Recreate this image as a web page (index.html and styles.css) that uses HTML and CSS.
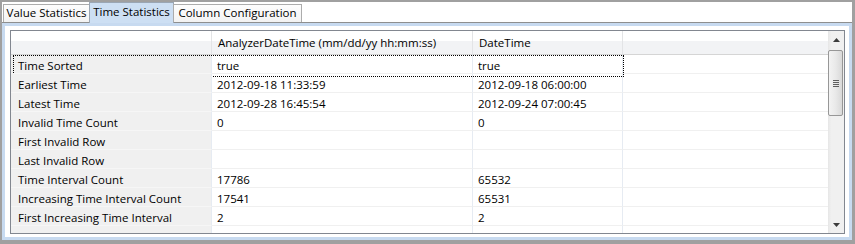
FILE: index.html
```html
<!DOCTYPE html>
<html>
<head>
<link rel="stylesheet" href="styles.css">
</head>
<body>

<div class="window">
  <div class="tabs">
    <div class="tab tab-value">Value Statistics</div>
    <div class="tab tab-time selected">Time Statistics</div>
    <div class="tab tab-columns">Column Configuration</div>
  </div>

  <div class="panel">
    <div class="grid">
      <div class="grid-body">
        <div class="row head">
          <div class="cell c1"></div>
          <div class="cell c2">AnalyzerDateTime (mm/dd/yy hh:mm:ss)</div>
          <div class="cell c3">DateTime</div>
          <div class="cell c4"></div>
        </div>
        <div class="row focused">
          <div class="cell c1">Time Sorted</div>
          <div class="cell c2">true</div>
          <div class="cell c3">true</div>
          <div class="cell c4"></div>
        </div>
        <div class="row">
          <div class="cell c1">Earliest Time</div>
          <div class="cell c2">2012-09-18 11:33:59</div>
          <div class="cell c3">2012-09-18 06:00:00</div>
          <div class="cell c4"></div>
        </div>
        <div class="row">
          <div class="cell c1">Latest Time</div>
          <div class="cell c2">2012-09-28 16:45:54</div>
          <div class="cell c3">2012-09-24 07:00:45</div>
          <div class="cell c4"></div>
        </div>
        <div class="row">
          <div class="cell c1">Invalid Time Count</div>
          <div class="cell c2">0</div>
          <div class="cell c3">0</div>
          <div class="cell c4"></div>
        </div>
        <div class="row">
          <div class="cell c1">First Invalid Row</div>
          <div class="cell c2"></div>
          <div class="cell c3"></div>
          <div class="cell c4"></div>
        </div>
        <div class="row">
          <div class="cell c1">Last Invalid Row</div>
          <div class="cell c2"></div>
          <div class="cell c3"></div>
          <div class="cell c4"></div>
        </div>
        <div class="row">
          <div class="cell c1">Time Interval Count</div>
          <div class="cell c2">17786</div>
          <div class="cell c3">65532</div>
          <div class="cell c4"></div>
        </div>
        <div class="row">
          <div class="cell c1">Increasing Time Interval Count</div>
          <div class="cell c2">17541</div>
          <div class="cell c3">65531</div>
          <div class="cell c4"></div>
        </div>
        <div class="row">
          <div class="cell c1">First Increasing Time Interval</div>
          <div class="cell c2">2</div>
          <div class="cell c3">2</div>
          <div class="cell c4"></div>
        </div>
        <div class="row">
          <div class="cell c1"></div>
          <div class="cell c2"></div>
          <div class="cell c3"></div>
          <div class="cell c4"></div>
        </div>
      </div>

      <div class="scrollbar">
        <div class="arrow">
          <svg width="7" height="4" viewBox="0 0 7 4"><path d="M3.5 0 L7 4 L0 4 Z" fill="#3c3c3c"/></svg>
        </div>
        <div class="track">
          <div class="thumb">
            <div class="grip"></div>
            <div class="grip"></div>
            <div class="grip"></div>
            <div class="grip"></div>
          </div>
        </div>
        <div class="arrow">
          <svg width="7" height="4" viewBox="0 0 7 4"><path d="M0 0 L7 0 L3.5 4 Z" fill="#3c3c3c"/></svg>
        </div>
      </div>
    </div>
  </div>
</div>

</body>
</html>
```

FILE: styles.css
```css
* {box-sizing: border-box;}

body {
  margin: 0;
  height: 244px;
  padding: 2px 3px 4px 2px;
  background: #a0a0a0;
  font-family: "Open Sans", "Liberation Sans", sans-serif;
  font-size: 11.5px;
  color: #000;
}

.window {
  height: 238px;
  background: #fff;
  display: flex;
  flex-direction: column;
}

/* tab strip */
.tabs {
  flex: none;
  display: flex;
  align-items: flex-end;
  height: 21px;
  padding-left: 1px;
  border-bottom: 1px solid #8e8f8f;
}

.tab {
  height: 18px;
  line-height: 16px;
  text-align: center;
  white-space: nowrap;
  border: 1px solid #acacac;
  border-bottom: none;
  background: linear-gradient(#fdfdfd, #f3f3f3);
}

.tab + .tab {margin-left: -1px;}

.tab-value {width: 87px;}
.tab-time {width: 85px;}
.tab-columns {width: 129px;}

.tab.selected {
  height: 21px;
  margin-bottom: -1px;
  line-height: 18px;
  border-color: #9aa6b4;
  background: #cddff3;
}

/* page area */
.panel {
  flex: 1;
  min-height: 0;
  border: 3px solid #c7daf0;
  padding: 4px 4px 3px 5px;
  display: flex;
}

.grid {
  flex: 1;
  display: flex;
  border: 1px solid #828790;
  overflow: hidden;
}

.grid-body {
  flex: 1;
  overflow: hidden;
}

.row {
  display: flex;
  height: 19px;
  position: relative;
}

.cell {
  flex: none;
  height: 19px;
  padding-top: 1px;
  line-height: 19px;
  white-space: nowrap;
  overflow: hidden;
  border-right: 1px solid #e6ebf2;
  border-bottom: 1px solid #f0f0f0;
  padding-left: 5px;
}

.c1 {width: 201px; padding-left: 7px; background: #f0f0f0; border-bottom-color: #f6f6f6;}
.c2 {width: 261px;}
.c3 {width: 150px;}
.c4 {flex: 1; border-right: none;}

.row.head {height: 24px;}

.head .cell {
  height: 24px;
  padding-top: 0;
  line-height: 23px;
  padding-left: 6px;
  background: linear-gradient(#ffffff 0, #ffffff 45%, #f2f3f5 45%, #f2f3f5 100%);
  border-right-color: #e3e4e6;
  border-bottom: 1px solid #d5d5d5;
}

.focused::after {
  content: "";
  position: absolute;
  left: 2px;
  top: 0;
  width: 609px;
  height: 20px;
  border: 1px dotted #000;
}

/* vertical scrollbar */
.scrollbar {
  width: 16px;
  display: flex;
  flex-direction: column;
  background: linear-gradient(90deg, #e6e6e6, #f0f0f0 20%, #f0f0f0);
}

.arrow {
  height: 17px;
  display: flex;
  align-items: center;
  justify-content: center;
}

.track {
  flex: 1;
  padding: 2px 0 0 0;
}

.thumb {
  height: 66px;
  margin: 0 1px 0 0;
  border: 1px solid #979797;
  border-radius: 2px;
  background: linear-gradient(90deg, #f3f3f3, #e9e9e9 50%, #d9d9d9);
  display: flex;
  flex-direction: column;
  justify-content: center;
  align-items: center;
  gap: 1px;
}

.grip {
  width: 6px;
  height: 1px;
  background: #5f5f5f;
}
```
